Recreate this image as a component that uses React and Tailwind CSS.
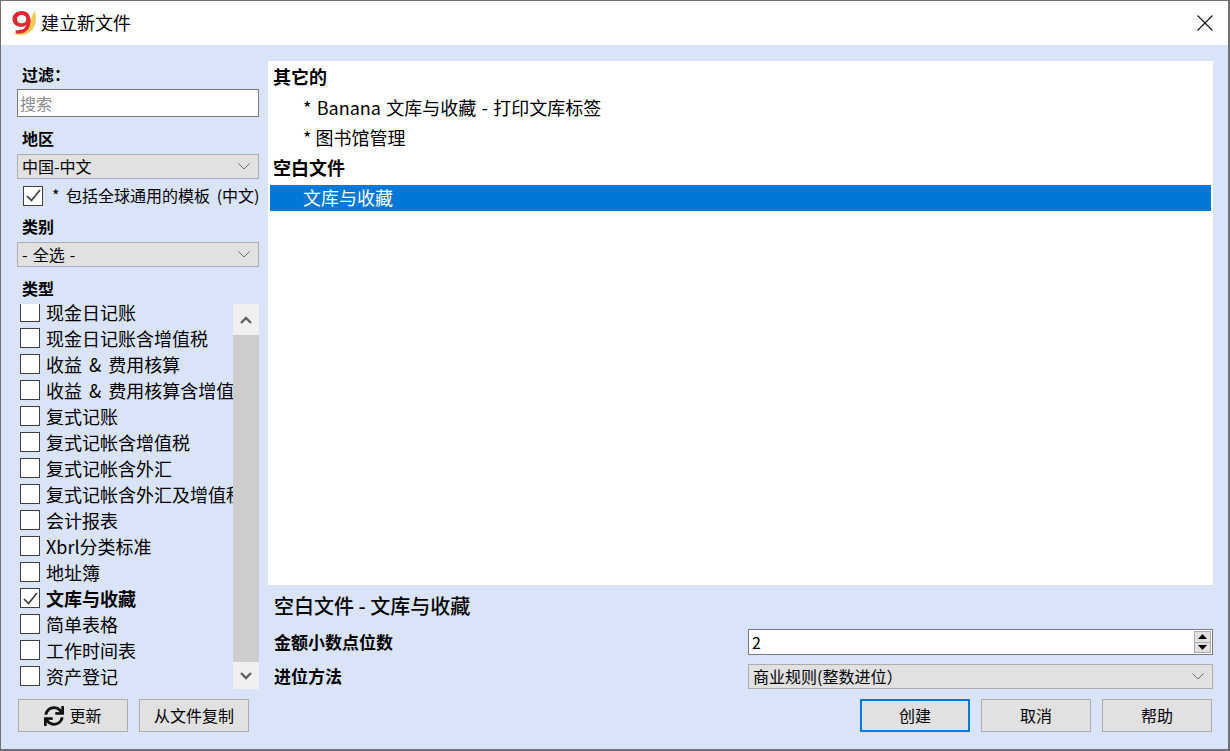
import React from "react";
import { FaSync } from "react-icons/fa";

const font = { fontFamily: '"Noto Sans CJK SC", "Noto Sans", sans-serif' };

function Chevron() {
  return (
    <svg width="12" height="7" viewBox="0 0 12 7" fill="none" stroke="#6b6b6b" strokeWidth="1">
      <path d="M0.5 0.5 L6 6 L11.5 0.5" />
    </svg>
  );
}

function Check() {
  return (
    <svg width="15" height="13" viewBox="0 0 15 13" fill="none" stroke="#3c3c3c" strokeWidth="1.7">
      <path d="M1 7 L5.5 11.5 L14 1" />
    </svg>
  );
}

function Box({ checked }) {
  return (
    <span className="w-[20px] h-[20px] shrink-0 bg-white border border-[#404040] flex items-center justify-center">
      {checked && <Check />}
    </span>
  );
}

function Select({ children, className = "" }) {
  return (
    <div className={"flex items-center justify-between bg-[#e1e1e1] border border-[#adadad] pl-[4px] pr-[8px] text-[16px] leading-none text-black [word-spacing:1.5px] " + className}>
      <span className="pb-[2px]">{children}</span>
      <Chevron />
    </div>
  );
}

function Label({ children, className = "" }) {
  return <div className={"h-[24px] flex items-center font-bold text-[16px] leading-none text-black pl-[5px] pb-[2px] " + className}>{children}</div>;
}

function Btn({ children, className = "" }) {
  return (
    <button className={"w-[110px] h-[33px] flex items-center justify-center bg-[#e1e1e1] border border-[#adadad] text-[16px] leading-none text-black pb-[2px] " + className}>
      {children}
    </button>
  );
}

const types = [
  ["现金日记账"],
  ["现金日记账含增值税"],
  ["收益 & 费用核算"],
  ["收益 & 费用核算含增值税"],
  ["复式记账"],
  ["复式记帐含增值税"],
  ["复式记帐含外汇"],
  ["复式记帐含外汇及增值税"],
  ["会计报表"],
  ["Xbrl分类标准"],
  ["地址簿"],
  ["文库与收藏", true],
  ["简单表格"],
  ["工作时间表"],
  ["资产登记"],
];

export default function App() {
  return (
    <div style={font} className="w-[1230px] h-[751px] flex flex-col bg-[#d9e4f9] border-t border-l border-r-2 border-b-2 border-[#707070] overflow-hidden">
      <div className="h-[44px] shrink-0 bg-white flex items-center pl-[10px] pr-[15px]">
        <svg width="26" height="26" viewBox="0 0 26 26" className="shrink-0">
          <path d="M23.5 0.5 C26.5 8 25 17 19 22 C14.5 25.5 7 26 2 23 C9 23 14 20 17 14 C19.5 9.5 21.5 5 23.5 0.5 Z" fill="#efcb55" />
          <path d="M11 1 C5.5 1 1.5 4.2 1.5 9 C1.5 14 5.5 16.8 10.3 16.8 C12.3 16.8 14 16.2 15.2 15.3 C14 18.5 11.2 20.2 7.5 20.2 L4.5 20.2 L5 23.5 L8.5 23.5 C15.5 23.5 19.5 18 19.5 10.5 C19.5 4.5 16.2 1 11 1 Z M10.8 5 C13.5 5 15.3 6.7 15.3 9.2 C15.3 11.7 13.5 13.2 10.8 13.2 C7.9 13.2 6 11.7 6 9.2 C6 6.7 7.9 5 10.8 5 Z" fill="#dd2a30" fillRule="evenodd" />
        </svg>
        <span className="ml-[4px] pb-[3px] text-[18px] leading-none text-black">建立新文件</span>
        <svg width="16" height="16" viewBox="0 0 16 16" className="ml-auto" stroke="#111" strokeWidth="1.1" fill="none">
          <path d="M0.5 0.5 L15.5 15.5 M15.5 0.5 L0.5 15.5" />
        </svg>
      </div>

      <div className="flex-1 flex min-h-0">
        <div className="w-[242px] ml-[16px] shrink-0 flex flex-col pt-[18px]">
          <Label>过滤：</Label>
          <div className="mt-[2px] h-[28px] bg-white border border-[#7a7a7a] flex items-center pl-[2px] text-[16px] leading-none text-[#8a8a8a]">搜索</div>
          <Label className="mt-[10px]">地区</Label>
          <Select className="mt-[3px] h-[25px]">中国-中文</Select>
          <div className="mt-[5px] h-[23px] flex items-center pl-[6px] text-[16px] leading-none text-black whitespace-nowrap [word-spacing:3px]">
            <Box checked />
            <span className="ml-[9px] pb-[2px]">* 包括全球通用的模板 (中文)</span>
          </div>
          <Label className="mt-[8px]">类别</Label>
          <Select className="mt-[3px] h-[25px]">- 全选 -</Select>
          <Label className="mt-[10px]">类型</Label>
          <div className="mt-[3px] h-[385px] flex overflow-hidden">
            <div className="w-[216px] shrink-0 overflow-hidden">
              <div className="-mt-[5px]">
                {types.map(([t, b]) => (
                  <div key={t} className="h-[26px] flex items-center pl-[3px] text-[18px] leading-none text-black whitespace-nowrap [word-spacing:3px]">
                    <Box checked={b} />
                    <span className={"ml-[6px] " + (b ? "font-bold" : "")}>{t}</span>
                  </div>
                ))}
              </div>
            </div>
            <div className="w-[26px] shrink-0 flex flex-col bg-[#cdcdcd]">
              <div className="h-[31px] bg-[#f0f0f0] flex items-center justify-center">
                <svg width="12" height="8" viewBox="0 0 12 8" fill="none" stroke="#606060" strokeWidth="2.4"><path d="M1 7 L6 2 L11 7" /></svg>
              </div>
              <div className="flex-1" />
              <div className="h-[27px] bg-[#f0f0f0] flex items-center justify-center">
                <svg width="12" height="8" viewBox="0 0 12 8" fill="none" stroke="#606060" strokeWidth="2.4"><path d="M1 1 L6 6 L11 1" /></svg>
              </div>
            </div>
          </div>
          <div className="mt-[10px] ml-[1px] flex gap-[11px]">
            <Btn><FaSync className="text-[20px] text-[#111] mr-[5px] mt-[2px]" />更新</Btn>
            <Btn>从文件复制</Btn>
          </div>
        </div>

        <div className="w-[945px] ml-[9px] shrink-0 flex flex-col pt-[16px]">
          <div className="h-[524px] bg-white px-[2px] text-[18px] leading-none text-black">
            <div className="h-[30px] flex items-center pl-[3px] font-bold">其它的</div>
            <div className="h-[31px] flex items-center pl-[33px] [word-spacing:1.3px]">* Banana 文库与收藏 - 打印文库标签</div>
            <div className="h-[30px] flex items-center pl-[33px]">* 图书馆管理</div>
            <div className="h-[30px] flex items-center pl-[3px] font-bold">空白文件</div>
            <div className="mt-[3px] h-[26px] flex items-center pl-[33px] pb-[2px] bg-[#0078d7] text-white">文库与收藏</div>
          </div>
          <div className="mt-[10px] h-[24px] flex items-center pl-[6px] pb-[2px] text-[20px] leading-none font-medium text-black">空白文件 - 文库与收藏</div>
          <div className="mt-[10px] h-[26px] flex items-center">
            <span className="w-[480px] pl-[6px] pb-[2px] text-[17px] leading-none font-bold text-black">金额小数点位数</span>
            <div className="w-[465px] h-[26px] bg-white border border-[#7a7a7a] flex items-center justify-between pl-[3px] pr-[1px] text-[16px] leading-none text-black">
              <span>2</span>
              <div className="w-[17px] h-[22px] flex flex-col">
                <div className="flex-1 bg-[#e1e1e1] border border-[#adadad] flex items-center justify-center">
                  <svg width="9" height="5" viewBox="0 0 9 5"><path d="M4.5 0 L9 5 L0 5 Z" fill="#000" /></svg>
                </div>
                <div className="flex-1 bg-[#e1e1e1] border border-t-0 border-[#adadad] flex items-center justify-center">
                  <svg width="9" height="5" viewBox="0 0 9 5"><path d="M0 0 L9 0 L4.5 5 Z" fill="#000" /></svg>
                </div>
              </div>
            </div>
          </div>
          <div className="mt-[9px] h-[25px] flex items-center">
            <span className="w-[480px] pl-[6px] pb-[2px] text-[17px] leading-none font-bold text-black">进位方法</span>
            <Select className="w-[465px] h-[25px]">商业规则(整数进位）</Select>
          </div>
          <div className="mt-[10px] flex justify-end gap-[11px] pr-[1px]">
            <Btn className="!border-2 !border-[#0078d7]">创建</Btn>
            <Btn>取消</Btn>
            <Btn>帮助</Btn>
          </div>
        </div>
      </div>
    </div>
  );
}
